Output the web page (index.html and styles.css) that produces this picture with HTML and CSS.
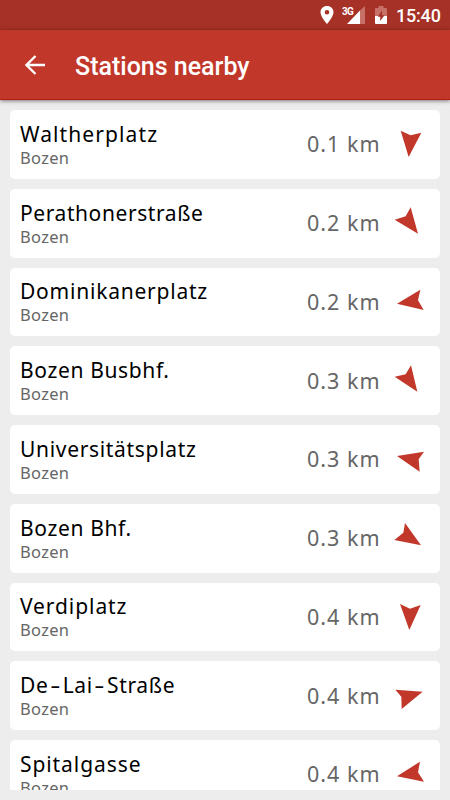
FILE: index.html
```
<!DOCTYPE html>
<html lang="en">
<head>
<meta charset="utf-8">
<title>Stations nearby</title>
<link rel="stylesheet" href="styles.css">
</head>
<body>
<div class="statusbar">
  <svg class="pin" viewBox="0 0 14 20"><path fill-rule="evenodd" d="M7 1C3.3 1 .5 3.7.5 7.3.5 12 7 19 7 19s6.500-7 6.500-11.700C13.500 3.700 10.700 1 7 1zm0 4a2.300 2.300 0 1 1 0 4.600A2.300 2.300 0 0 1 7 5z"/></svg>
  <div class="network">
    <span class="network-type">3G</span>
    <svg class="signal" viewBox="0 0 22 18"><path class="dim" d="M17 4.500L22 0v18h-5z"/><path d="M17 4.500V18H4z"/></svg>
  </div>
  <svg class="battery" viewBox="0 0 12 18"><path class="dim" d="M0 3q0-1 1-1h2.500V0h5v2H11q1 0 1 1v7H0z"/><path d="M0 10h12v7q0 1-1 1H1q-1 0-1-1z"/><path class="bolt" d="M7 4.500v4.800h2.500L5.200 15v-4.300H2.800z"/></svg>
  <span class="clock">15:40</span>
</div>
<header class="toolbar">
  <svg class="back" viewBox="0 0 20 20"><path d="M20 10H1.500M10.500 1L1.500 10l9 9"/></svg>
  <h1>Stations nearby</h1>
</header>
<main class="stations">
  <article class="card"><div class="place"><h2 class="n1">Waltherplatz</h2><p>Bozen</p></div><span class="distance">0.1 km</span><svg class="arrow" viewBox="0 0 90 90"><path d="M17 5L47 19L79 11L41 84z"/></svg></article>
  <article class="card"><div class="place"><h2 class="n2">Perathonerstraße</h2><p>Bozen</p></div><span class="distance">0.2 km</span><svg class="arrow" viewBox="0 0 90 90"><path d="M47-2L32 25L-1 35L69 77z"/></svg></article>
  <article class="card"><div class="place"><h2 class="n3">Dominikanerplatz</h2><p>Bozen</p></div><span class="distance">0.2 km</span><svg class="arrow" viewBox="0 0 90 90"><path d="M76 8L69 40L86 69L6 50z"/></svg></article>
  <article class="card"><div class="place"><h2 class="n4">Bozen Busbhf.</h2><p>Bozen</p></div><span class="distance">0.3 km</span><svg class="arrow" viewBox="0 0 90 90"><path d="M48-2L32 25L-1 32L67 77z"/></svg></article>
  <article class="card"><div class="place"><h2 class="n5">Universitätsplatz</h2><p>Bozen</p></div><span class="distance">0.3 km</span><svg class="arrow" viewBox="0 0 90 90"><path d="M87 23L71 46L74 83L6 36z"/></svg></article>
  <article class="card"><div class="place"><h2 class="n6">Bozen Bhf.</h2><p>Bozen</p></div><span class="distance">0.3 km</span><svg class="arrow" viewBox="0 0 90 90"><path d="M30 0L25 29L-2 51L78 67z"/></svg></article>
  <article class="card"><div class="place"><h2 class="n7">Verdiplatz</h2><p>Bozen</p></div><span class="distance">0.4 km</span><svg class="arrow" viewBox="0 0 90 90"><path d="M15 6L45 20L77 9L43 84z"/></svg></article>
  <article class="card"><div class="place"><h2 class="n8">De<span class="hyphen">-</span>Lai<span class="hyphen">-</span>Straße</h2><p>Bozen</p></div><span class="distance">0.4 km</span><svg class="arrow" viewBox="0 0 90 90"><path d="M1 26L19 47L20 84L83 32z"/></svg></article>
  <article class="card"><div class="place"><h2 class="n9">Spitalgasse</h2><p>Bozen</p></div><span class="distance">0.4 km</span><svg class="arrow" viewBox="0 0 90 90"><path d="M75 8L69 40L87 68L6 52z"/></svg></article>
</main>
</body>
</html>
```
FILE: styles.css
```
* { box-sizing: border-box; margin: 0; padding: 0; }
body {
  width: 450px;
  height: 800px;
  overflow: hidden;
  display: flex;
  flex-direction: column;
  background: #ededed;
  font-family: "Noto Sans", sans-serif;
}
svg { display: block; flex: none; }
.statusbar {
  height: 30px;
  flex: none;
  display: flex;
  align-items: center;
  justify-content: flex-end;
  padding-right: 10px;
  background: #a63126;
  color: #fff;
  fill: #fff;
}
.pin { width: 14px; height: 20px; margin-right: 8px; }
.network { display: flex; position: relative; width: 23px; height: 18px; justify-content: flex-end; margin-right: 10px; }
.network-type { position: absolute; left: 0; top: 1px; font: 700 10px/10px Roboto, sans-serif; letter-spacing: -0.7px; }
.signal { width: 22px; height: 18px; }
.battery { width: 12px; height: 18px; margin-right: 9px; }
.dim { fill: #c77068; }
.bolt { fill: #a63126; }
.clock { font: 500 18px/30px Roboto, sans-serif; padding-top: 2px; width: 44px; letter-spacing: -0.2px; white-space: nowrap; }
.toolbar {
  height: 70px;
  flex: none;
  display: flex;
  align-items: center;
  padding-left: 25px;
  gap: 30px;
  background: #c1382b;
  color: #fff;
  border-bottom: 1px solid #b01c10;
  box-shadow: 0 1px 4px rgba(0, 0, 0, .5);
  position: relative;
}
.back { width: 20px; height: 20px; fill: none; stroke: #fff; stroke-width: 2.300; }
.toolbar h1 { font: 500 25px/30px Roboto, sans-serif; padding-top: 5px; white-space: nowrap; }
.stations {
  height: 690px;
  flex: none;
  padding: 10px 10px 0;
  margin-bottom: 10px;
  display: flex;
  flex-direction: column;
  gap: 10px;
  overflow: hidden;
}
.card {
  height: 68.75px;
  flex: none;
  display: flex;
  align-items: center;
  padding: 0 15px 0 10px;
  background: #fff;
  border-radius: 5px;
}
.place { flex: 1; padding-top: 1px; }
.place h2 { font-size: 21px; line-height: 26px; font-weight: 400; color: #000; white-space: nowrap; }
.place p { font-size: 16.500px; line-height: 22px; color: #666; letter-spacing: .3px; }
/* Tracking tuned per station name */
.n1 { letter-spacing: 1.100px; }
.n2 { letter-spacing: .58px; }
.n3 { letter-spacing: .78px; }
.n4 { letter-spacing: .64px; }
.n5 { letter-spacing: .68px; }
.n6 { letter-spacing: .65px; }
.n7 { letter-spacing: .92px; }
.n8 { letter-spacing: .65px; }
.n9 { letter-spacing: .92px; }
.hyphen { display: inline-block; margin: 0 3.400px; transform: scaleX(1.500); }
.distance { width: 73px; margin-right: 15px; font-size: 21.500px; line-height: 30px; color: #666; white-space: nowrap; letter-spacing: 1px; }
.arrow { width: 30px; height: 30px; overflow: visible; fill: #c1382b; }
```
